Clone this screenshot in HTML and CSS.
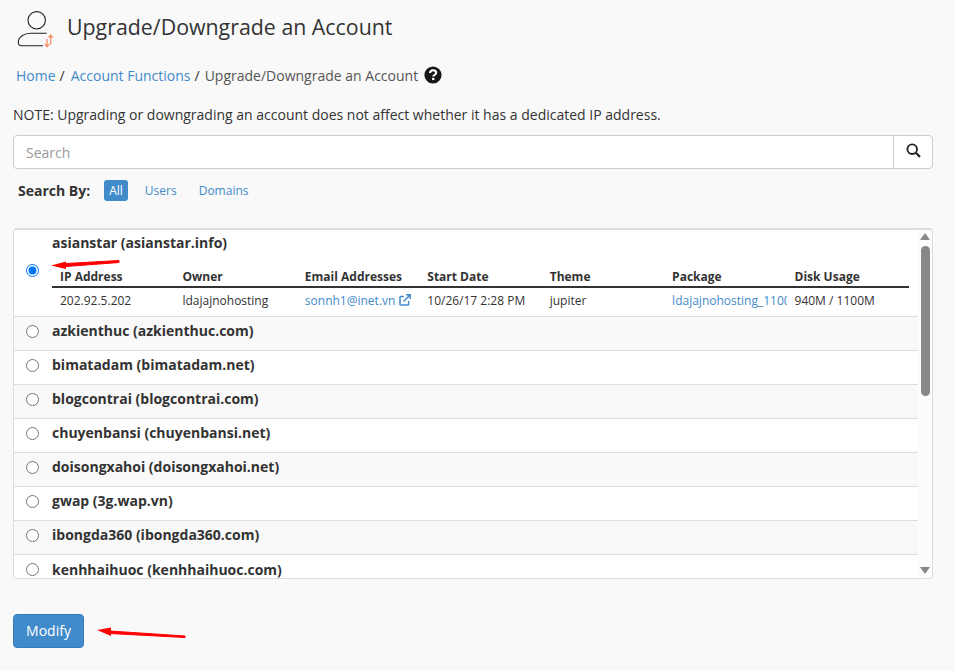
FILE: index.html
```html
<!DOCTYPE html>
<html lang="en">
<head>
    <meta charset="UTF-8">
    <meta name="viewport" content="width=device-width, initial-scale=1.0">
    <title>Upgrade/Downgrade an Account</title>
    <link rel="stylesheet" href="styles.css">
</head>
<body>
    <div class="page_title">
        <svg class="title_icon" width="38" height="40" viewBox="0 0 38 40" fill="none">
            <circle cx="19.7" cy="11.3" r="8.7" stroke="#222" stroke-width="1.1"/>
            <path d="M29.7 24.3H14C7 24.3 1.5 28 1.3 33C1.2 35.5 2.5 36.7 4.5 36.7H26" stroke="#222" stroke-width="1.1"/>
            <path d="M33.7 35.5V26.5M31.5 28.6L33.7 26L35.9 28.6" stroke="#f58b64" stroke-width="1.3"/>
            <path d="M30 30V37.5M27.8 35.2L30 37.8L32.2 35.2" stroke="#f58b64" stroke-width="1.3"/>
        </svg>
        <h1>Upgrade/Downgrade an Account</h1>
    </div>

    <div class="breadcrumb">
        <a href="#">Home</a><span class="sep">/</span>
        <a href="#">Account Functions</a><span class="sep">/</span>
        <span class="current">Upgrade/Downgrade an Account</span>
        <svg class="help" width="18" height="18" viewBox="0 0 18 18">
            <circle cx="9" cy="9" r="8.6" fill="#161616"/>
            <path d="M6 7C6.1 5.2 7.3 4.2 9.1 4.2C10.9 4.2 12.2 5.3 12.2 6.8C12.2 8.9 9.3 8.9 9.3 10.6" stroke="#fff" stroke-width="2" fill="none"/>
            <rect x="8.1" y="11.8" width="2.3" height="2.3" fill="#fff"/>
        </svg>
    </div>

    <p class="note">NOTE: Upgrading or downgrading an account does not affect whether it has a dedicated IP address.</p>

    <div class="search_box">
        <input type="text" placeholder="Search">
        <button type="button" class="search_btn" aria-label="Search">
            <svg width="15" height="15" viewBox="0 0 15 15" fill="none">
                <circle cx="6.2" cy="6.2" r="4.8" stroke="#222" stroke-width="1.9"/>
                <path d="M9.8 9.8L14 14" stroke="#222" stroke-width="2.2"/>
            </svg>
        </button>
    </div>

    <div class="search_by">
        <strong>Search By:</strong>
        <a href="#" class="filter active">All</a>
        <a href="#" class="filter">Users</a>
        <a href="#" class="filter">Domains</a>
    </div>

    <div class="panel">
        <div class="list">
            <div class="row selected">
                <input type="radio" name="account" checked>
                <div class="row_body">
                    <div class="name">asianstar (asianstar.info)</div>
                    <table>
                        <tr>
                            <th>IP Address</th>
                            <th>Owner</th>
                            <th>Email Addresses</th>
                            <th>Start Date</th>
                            <th>Theme</th>
                            <th>Package</th>
                            <th>Disk Usage</th>
                        </tr>
                        <tr>
                            <td>202.92.5.202</td>
                            <td>ldajajnohosting</td>
                            <td><a href="#">sonnh1@inet.vn <svg width="12" height="12" viewBox="0 0 12 12" fill="none"><path d="M9.6 7V10.2C9.6 10.7 9.2 11 8.8 11H1.8C1.3 11 1 10.7 1 10.2V3.2C1 2.8 1.3 2.4 1.8 2.4H5" stroke="#428bca" stroke-width="1.5"/><path d="M4.5 7.5L10.5 1.5M7 .8H11.2V5" stroke="#428bca" stroke-width="1.5"/></svg></a></td>
                            <td>10/26/17 2:28 PM</td>
                            <td>jupiter</td>
                            <td><a href="#">ldajajnohosting_1100M</a></td>
                            <td>940M / 1100M</td>
                        </tr>
                    </table>
                </div>
            </div>
            <div class="row"><input type="radio" name="account"><div class="name">azkienthuc (azkienthuc.com)</div></div>
            <div class="row"><input type="radio" name="account"><div class="name">bimatadam (bimatadam.net)</div></div>
            <div class="row"><input type="radio" name="account"><div class="name">blogcontrai (blogcontrai.com)</div></div>
            <div class="row"><input type="radio" name="account"><div class="name">chuyenbansi (chuyenbansi.net)</div></div>
            <div class="row"><input type="radio" name="account"><div class="name">doisongxahoi (doisongxahoi.net)</div></div>
            <div class="row"><input type="radio" name="account"><div class="name">gwap (3g.wap.vn)</div></div>
            <div class="row"><input type="radio" name="account"><div class="name">ibongda360 (ibongda360.com)</div></div>
            <div class="row"><input type="radio" name="account"><div class="name">kenhhaihuoc (kenhhaihuoc.com)</div></div>
        </div>
        <div class="scrollbar">
            <svg width="10" height="7" viewBox="0 0 10 7"><path d="M5 0L10 7H0Z" fill="#888"/></svg>
            <div class="track"><div class="thumb"></div></div>
            <svg width="10" height="7" viewBox="0 0 10 7"><path d="M5 7L10 0H0Z" fill="#888"/></svg>
        </div>
    </div>

    <button type="button" class="modify">Modify</button>

    <!-- red arrows drawn on top of the screenshot -->
    <svg class="marks" width="955" height="671" viewBox="0 0 955 671">
        <path d="M119 260.5L66 263.5L66 266.5L119 262.5Z" fill="#f00" stroke="#f00" stroke-width="1"/>
        <path d="M51 265.5L66 261.5L66 269Z" fill="#f00"/>
        <path d="M185 636L110 631L110 633.5L185 637.5Z" fill="#f00" stroke="#f00" stroke-width="1"/>
        <path d="M97 630L111 627.5L111 636Z" fill="#f00"/>
    </svg>
</body>
</html>
```

FILE: styles.css
```css
*{
    box-sizing: border-box;
}
body{
    margin: 0;
    padding: 0 22px 0 13px;
    background-color: #f9f9f9;
    color: #333;
    font-family: "Open Sans", sans-serif;
    font-size: 14px;
    position: relative;
}
a{
    color: #428bca;
    text-decoration: none;
}
.page_title{
    display: flex;
    align-items: center;
    height: 56px;
    padding-left: 4px;
    padding-bottom: 4px;
}
.title_icon{
    margin-right: 12px;
    margin-top: 6px;
}
h1{
    margin: 0;
    font-size: 21.35px;
    font-weight: 400;
    color: #333;
}
.breadcrumb{
    display: flex;
    align-items: center;
    height: 20px;
    margin-top: 9px;
    padding-left: 3px;
}
.sep{
    margin: 0 6px 0 4px;
}
.current{
    color: #555;
    margin-left: -1px;
}
.help{
    margin-left: 6px;
}
.note{
    margin: 20px 0 0;
    line-height: 20px;
}
.search_box{
    display: flex;
    height: 34px;
    margin-top: 10px;
    background-color: #fff;
    border: 1px solid #ccc;
    border-radius: 4px;
}
.search_box input{
    flex: 1;
    border: 0;
    outline: 0;
    padding: 0 12px;
    background: transparent;
    font-family: inherit;
    font-size: 14px;
}
.search_box input::placeholder{
    color: #999;
}
.search_btn{
    width: 39px;
    border: 0;
    border-left: 1px solid #ccc;
    background: transparent;
    padding: 0;
}
.search_by{
    display: flex;
    align-items: center;
    height: 21px;
    margin-top: 11px;
    padding-left: 5px;
    font-size: 12px;
}
.search_by strong{
    font-size: 14px;
    margin-right: 14px;
}
.filter{
    padding: 0 5px;
    line-height: 21px;
    margin-right: 12px;
    border-radius: 3px;
}
.filter.active{
    background-color: #428bca;
    color: #fff;
}
.panel{
    display: flex;
    height: 351px;
    margin-top: 27px;
    background-color: #fff;
    border: 1px solid #ddd;
    border-top-width: 2px;
    border-radius: 4px;
    overflow: hidden;
}
.list{
    flex: 1;
    overflow: hidden;
}
.row{
    display: flex;
    align-items: center;
    height: 34px;
    padding-left: 12px;
    padding-bottom: 5px;
    border-bottom: 1px solid #ddd;
}
.row:nth-child(even){
    background-color: #f9f9f9;
}
.row:last-child{
    border-bottom: 0;
}
.row input{
    width: 13px;
    height: 13px;
    margin: 0 13px 0 0;
}
.row.selected{
    height: 87px;
}
.name{
    font-weight: 700;
    line-height: 20px;
}
.row_body{
    flex: 1;
    height: 100%;
    padding-top: 3px;
    padding-right: 9px;
}
table{
    width: 100%;
    table-layout: fixed;
    border-collapse: collapse;
    margin-top: 13px;
    font-size: 12px;
}
th{
    height: 21px;
    padding: 0 8px;
    text-align: left;
    border-bottom: 2px solid #333;
}
td{
    height: 26px;
    padding: 0 8px;
    white-space: nowrap;
    overflow: hidden;
}
td svg{
    vertical-align: -1px;
}
.scrollbar{
    width: 14px;
    padding-top: 3px;
    background-color: #fcfcfc;
    display: flex;
    flex-direction: column;
    align-items: center;
}
.scrollbar svg{
    flex: none;
}
.track{
    flex: 1;
    padding-top: 6px;
}
.thumb{
    width: 9px;
    height: 150px;
    background-color: #888;
    border-radius: 5px;
}
.scrollbar svg:last-child{
    margin-bottom: 4px;
}
.modify{
    display: block;
    width: 71px;
    height: 34px;
    margin-top: 35px;
    padding: 0 0 2px;
    background-color: #428bca;
    border: 1px solid #357ebd;
    border-radius: 4px;
    color: #fff;
    font-family: inherit;
    font-size: 14px;
}
.marks{
    position: absolute;
    left: 0;
    top: 0;
    pointer-events: none;
}
```
